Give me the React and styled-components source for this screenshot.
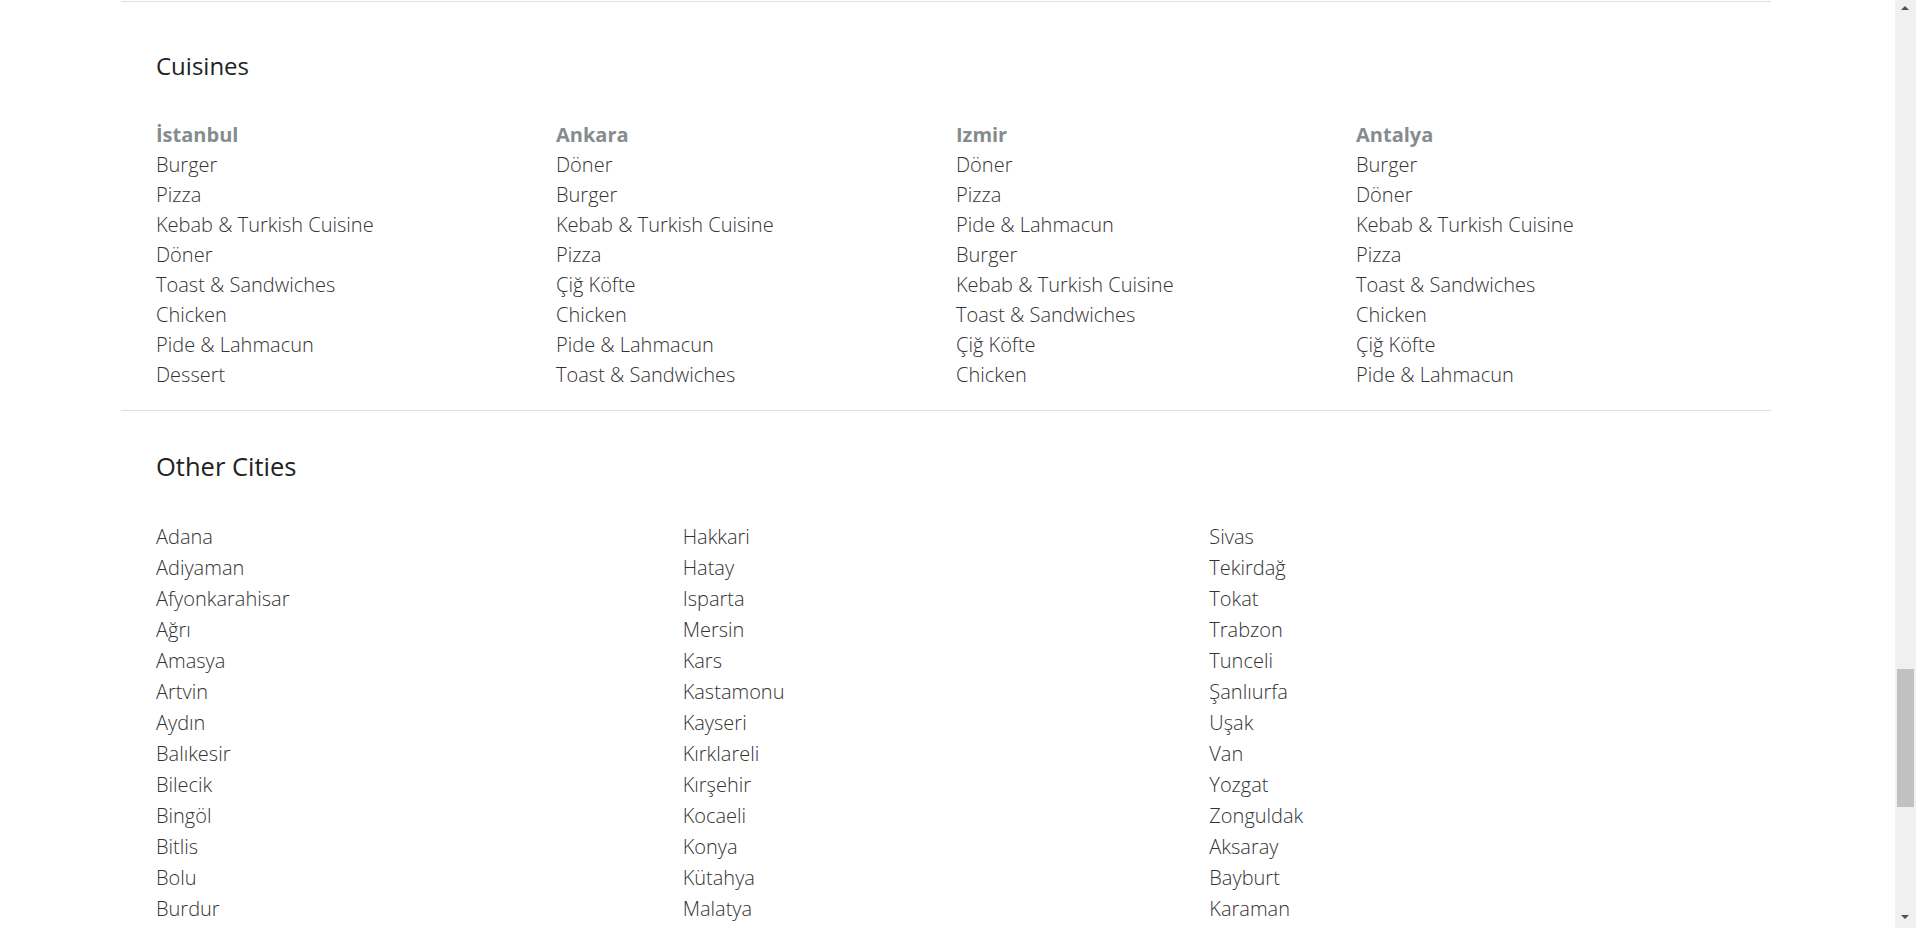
import React from 'react';
import styled, { createGlobalStyle } from 'styled-components';

const GlobalStyle = createGlobalStyle`
    html, body {
        margin: 0;
        padding: 0;
        overflow: hidden;
        background: #fff;
    }
    * {
        box-sizing: border-box;
    }
`

const SViewport = styled.div`
    display: flex;
    width: 1916px;
    height: 928px;
    overflow: hidden;
    font-family: "Open Sans", "Noto Sans", sans-serif;
`

const SPage = styled.div`
    flex: 1;
    height: 100%;
    overflow: hidden;
    background: #fff;
`

const SContainer = styled.div`
    width: 1650px;
    margin-left: 121px;
`

const SDivider = styled.hr`
    margin: ${props => props.top || 0}px 0 0 0;
    border: 0;
    height: 1px;
    background: #dedede;
`

const SSection = styled.section`
    padding: ${props => props.pt}px 35px ${props => props.pb}px;
`

const STitle = styled.h2`
    margin: 0 0 ${props => props.gap}px 0;
    height: 36px;
    font-size: ${props => props.size}px;
    line-height: 36px;
    font-weight: 400;
    color: #222;
`

const SGrid = styled.div`
    display: grid;
    grid-template-columns: ${props => props.cols};
`

const SColumn = styled.ul`
    list-style: none;
    margin: 0;
    padding: 0;
    font-size: 20px;
    line-height: ${props => props.lh}px;
`

const SCityHeading = styled.li`
    font-weight: 700;
    color: #858c8f;
`

const SItem = styled.li`
    font-weight: 300;
    color: #333;
    white-space: nowrap;
`

const SScrollbar = styled.div`
    position: relative;
    width: 21px;
    height: 100%;
    background: #f0f0f0;
`

const SArrow = styled.div`
    position: absolute;
    left: 6px;
    width: 0;
    height: 0;
    border-left: 4.5px solid transparent;
    border-right: 4.5px solid transparent;
    ${props => props.down
        ? 'bottom: 9px; border-top: 4px solid #505050;'
        : 'top: 6px; border-bottom: 4px solid #505050;'}
`

const SThumb = styled.div`
    position: absolute;
    left: 2px;
    top: 669px;
    width: 17px;
    height: 138px;
    background: #c1c1c1;
`

const cuisines = [
    { city: 'İstanbul', items: ['Burger', 'Pizza', 'Kebab & Turkish Cuisine', 'Döner', 'Toast & Sandwiches', 'Chicken', 'Pide & Lahmacun', 'Dessert'] },
    { city: 'Ankara', items: ['Döner', 'Burger', 'Kebab & Turkish Cuisine', 'Pizza', 'Çiğ Köfte', 'Chicken', 'Pide & Lahmacun', 'Toast & Sandwiches'] },
    { city: 'Izmir', items: ['Döner', 'Pizza', 'Pide & Lahmacun', 'Burger', 'Kebab & Turkish Cuisine', 'Toast & Sandwiches', 'Çiğ Köfte', 'Chicken'] },
    { city: 'Antalya', items: ['Burger', 'Döner', 'Kebab & Turkish Cuisine', 'Pizza', 'Toast & Sandwiches', 'Chicken', 'Çiğ Köfte', 'Pide & Lahmacun'] },
];

const otherCities = [
    ['Adana', 'Adiyaman', 'Afyonkarahisar', 'Ağrı', 'Amasya', 'Artvin', 'Aydın', 'Balıkesir', 'Bilecik', 'Bingöl', 'Bitlis', 'Bolu', 'Burdur'],
    ['Hakkari', 'Hatay', 'Isparta', 'Mersin', 'Kars', 'Kastamonu', 'Kayseri', 'Kırklareli', 'Kırşehir', 'Kocaeli', 'Konya', 'Kütahya', 'Malatya'],
    ['Sivas', 'Tekirdağ', 'Tokat', 'Trabzon', 'Tunceli', 'Şanlıurfa', 'Uşak', 'Van', 'Yozgat', 'Zonguldak', 'Aksaray', 'Bayburt', 'Karaman'],
];

export default function App() {
    return (
        <SViewport>
            <GlobalStyle />
            <SPage>
                <SContainer>
                    <SDivider top={1} />
                    <SSection pt={46} pb={20}>
                        <STitle gap={36} size={24}>Cuisines</STitle>
                        <SGrid cols="repeat(4, 400px)">
                            {cuisines.map(col => (
                                <SColumn key={col.city} lh={30}>
                                    <SCityHeading>{col.city}</SCityHeading>
                                    {col.items.map(item => <SItem key={item}>{item}</SItem>)}
                                </SColumn>
                            ))}
                        </SGrid>
                    </SSection>
                    <SDivider />
                    <SSection pt={37} pb={0}>
                        <STitle gap={37} size={25.5}>Other Cities</STitle>
                        <SGrid cols="repeat(3, 1fr)">
                            {otherCities.map((col, i) => (
                                <SColumn key={i} lh={31}>
                                    {col.map(name => <SItem key={name}>{name}</SItem>)}
                                </SColumn>
                            ))}
                        </SGrid>
                    </SSection>
                </SContainer>
            </SPage>
            <SScrollbar>
                <SArrow />
                <SThumb />
                <SArrow down />
            </SScrollbar>
        </SViewport>
    );
}
